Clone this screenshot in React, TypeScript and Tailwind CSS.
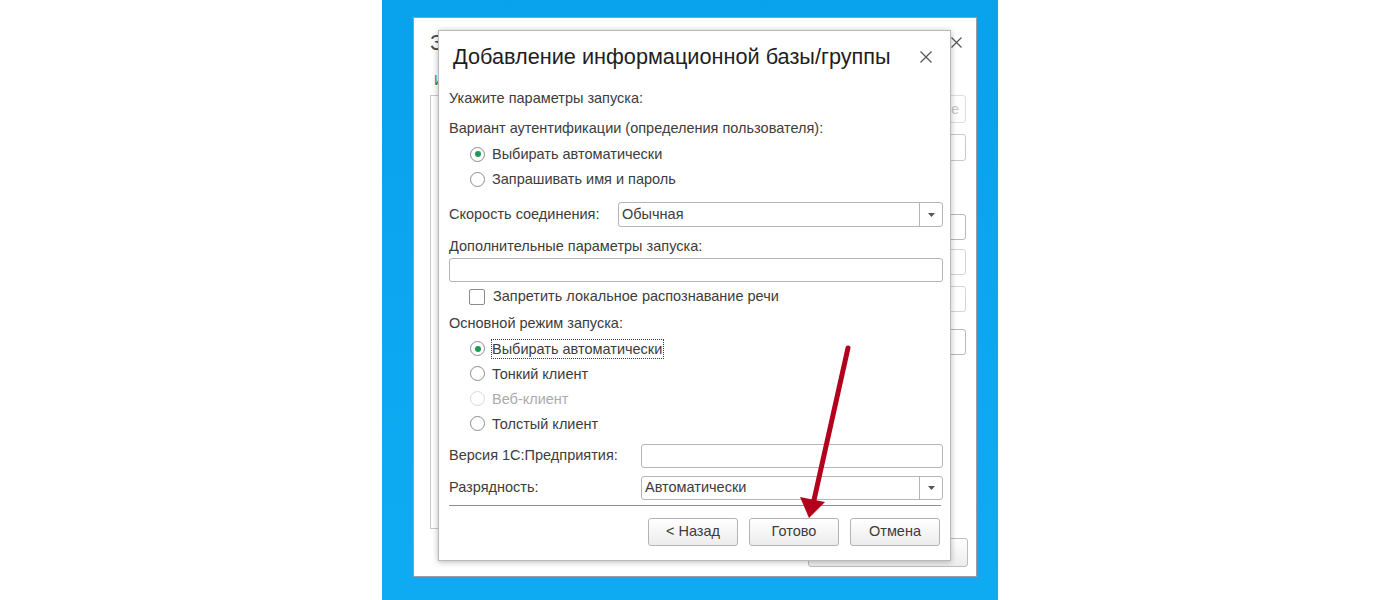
import clsx from 'clsx'

const FONT = "font-['Liberation_Sans',Arial,sans-serif]"

function Radio({ label, checked, disabled, focused }: { label: string; checked?: boolean; disabled?: boolean; focused?: boolean }) {
  return (
    <div className="flex items-center h-[25px] pl-[21px]">
      <span
        className={clsx(
          'w-[15px] h-[15px] rounded-full border bg-white flex items-center justify-center shrink-0',
          disabled ? 'border-[#d9d9d9]' : 'border-[#8c8c8c]'
        )}
      >
        {checked && <span className="w-[6px] h-[6px] rounded-full bg-[#1f9a56]" />}
      </span>
      <span
        className={clsx(
          'text-[14.5px] leading-[18px]',
          disabled ? 'text-[#ababab]' : 'text-[#3c3c3c]',
          focused ? 'ml-[6px] border border-dotted border-[#3c3c3c] pr-[1px]' : 'ml-[7px]'
        )}
      >
        {label}
      </span>
    </div>
  )
}

function Select({ value, tall }: { value: string; tall?: boolean }) {
  return (
    <div className={clsx('flex-1 flex border border-[#b5b5b5] rounded-[3px] bg-white', tall ? 'h-[25px]' : 'h-[24px]')}>
      <div className="flex-1 flex items-center pl-[3px] text-[#3c3c3c]">{value}</div>
      <div className="w-[23px] border-l border-[#b5b5b5] flex items-center justify-center">
        <svg width="7" height="4" viewBox="0 0 7 4">
          <path d="M0 0h7L3.5 4z" fill="#555" />
        </svg>
      </div>
    </div>
  )
}

function Btn({ label }: { label: string }) {
  return (
    <button className="w-[90px] h-[28px] border border-[#b3b3b3] rounded-[3px] bg-gradient-to-b from-white to-[#ececec] text-[14.5px] text-[#3c3c3c] flex items-center justify-center">
      {label}
    </button>
  )
}

function BackgroundWindow() {
  return (
    <div className="absolute left-[31px] top-[17px] w-[564px] h-[560px] bg-white border border-[#9e9e9e]">
      <div className="flex items-center justify-between h-[48px] pl-[16px] pr-[14px]">
        <span className="text-[22px] text-[#4d4d4d]">Запуск 1С:Предприятия</span>
        <svg width="11" height="11" viewBox="0 0 11 11" stroke="#555" strokeWidth="1.2">
          <path d="M0.5 0.5l10 10M10.5 0.5l-10 10" />
        </svg>
      </div>
      <div className="pl-[20px] text-[14px] text-[#2e8b57] h-[28px] flex items-center">Информационные базы</div>
      <div className="flex gap-[10px] pl-[16px] pr-[10px] mt-[1px]">
        <div className="w-[420px] h-[434px] border border-[#c9c9c9]" />
        <div className="flex-1 flex flex-col">
          <div className="h-[28px] border border-[#dedede] rounded-[3px] flex items-center justify-end pr-[6px] text-[14px] text-[#c4c4c4] overflow-hidden whitespace-nowrap">1С:Предприятие</div>
          <div className="h-[27px] mt-[11px] border border-[#c9c9c9] rounded-[3px]" />
          <div className="h-[26px] mt-[53px] border border-[#b8b8b8] rounded-[3px]" />
          <div className="h-[26px] mt-[9px] border border-[#d4d4d4] rounded-[3px]" />
          <div className="h-[26px] mt-[11px] border border-[#d4d4d4] rounded-[3px]" />
          <div className="h-[26px] mt-[17px] border border-[#b8b8b8] rounded-[3px]" />
        </div>
      </div>
      <div className="flex justify-end pr-[8px] mt-[9px]">
        <div className="w-[160px] h-[29px] border border-[#bdbdbd] rounded-[3px] bg-gradient-to-b from-white to-[#ececec]" />
      </div>
    </div>
  )
}

function Dialog() {
  return (
    <div className="absolute left-[56px] top-[30px] w-[513px] h-[531px] bg-white border border-[#b9b9b9] shadow-[0_1px_6px_rgba(0,0,0,0.28)] flex flex-col">
      {/* Header */}
      <div className="h-[52px] flex items-center justify-between pl-[14px] pr-[18px]">
        <span className="text-[21.7px] text-[#1e1e1e]">Добавление информационной базы/группы</span>
        <svg width="12" height="12" viewBox="0 0 12 12" stroke="#555" strokeWidth="1.2">
          <path d="M0.5 0.5l11 11M11.5 0.5l-11 11" />
        </svg>
      </div>

      <div className="pl-[10px] pr-[7px] text-[14.5px] text-[#3c3c3c] flex flex-col">
        <div className="h-[32px] flex items-center">Укажите параметры запуска:</div>
        <div className="h-[28px] flex items-center">Вариант аутентификации (определения пользователя):</div>
        <div className="h-[22px] flex items-center">
          <Radio label="Выбирать автоматически" checked />
        </div>
        <div className="h-[28px] flex items-center">
          <Radio label="Запрашивать имя и пароль" />
        </div>

        <div className="mt-[9px] flex items-center">
          <span className="w-[169px]">Скорость соединения:</span>
          <Select value="Обычная" tall />
        </div>

        <div className="mt-[10px] h-[20px] flex items-center">Дополнительные параметры запуска:</div>
        <div className="mt-[1px] h-[24px] border border-[#b5b5b5] rounded-[3px]" />

        <div className="h-[30px] flex items-center pl-[20px]">
          <span className="w-[16px] h-[16px] border border-[#8c8c8c] rounded-[2px] bg-white" />
          <span className="ml-[8px]">Запретить локальное распознавание речи</span>
        </div>

        <div className="h-[24px] flex items-center">Основной режим запуска:</div>
        <Radio label="Выбирать автоматически" checked focused />
        <Radio label="Тонкий клиент" />
        <Radio label="Веб-клиент" disabled />
        <Radio label="Толстый клиент" />

        <div className="mt-[8px] flex items-center">
          <span className="w-[192px]">Версия 1С:Предприятия:</span>
          <div className="flex-1 h-[24px] border border-[#b5b5b5] rounded-[3px]" />
        </div>
        <div className="mt-[8px] flex items-center">
          <span className="w-[192px]">Разрядность:</span>
          <Select value="Автоматически" />
        </div>

        <div className="mt-[5px] border-t border-[#8f8f8f] mr-[2px]" />

        <div className="mt-[12px] flex justify-end gap-[11px] pr-[3px]">
          <Btn label="< Назад" />
          <Btn label="Готово" />
          <Btn label="Отмена" />
        </div>
      </div>
    </div>
  )
}

export default function App() {
  return (
    <div className={clsx('w-full h-[600px] bg-white flex justify-center', FONT)}>
      <div className="relative w-[616px] h-[600px] bg-gradient-to-b from-[#08a2ec] to-[#0eabf3] overflow-hidden">
        <BackgroundWindow />
        <Dialog />
        <svg className="absolute inset-0 pointer-events-none" width="616" height="600" viewBox="0 0 616 600">
          <line x1="466" y1="348" x2="432" y2="500" stroke="#b2001d" strokeWidth="5" strokeLinecap="round" />
          <polygon points="427,518 418,497 443,502" fill="#b2001d" />
        </svg>
      </div>
    </div>
  )
}
